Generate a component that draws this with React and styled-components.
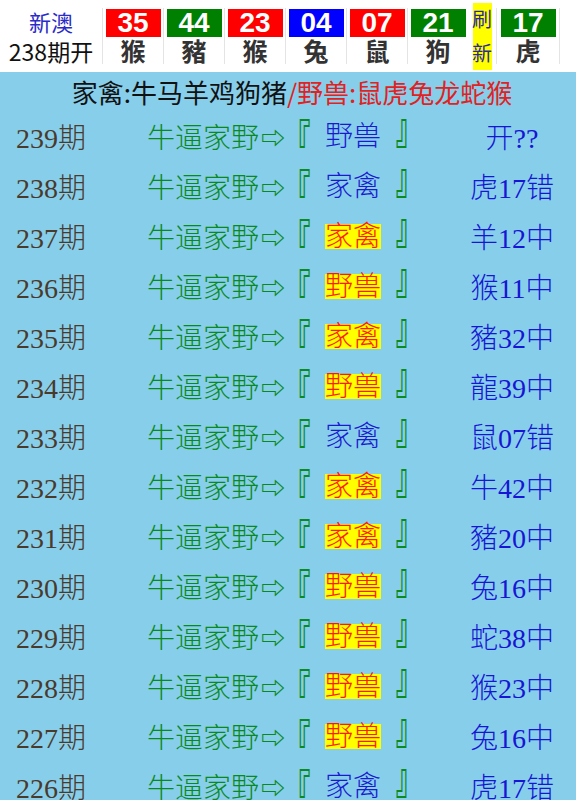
import React from "react";
import styled, { createGlobalStyle } from "styled-components";

const GlobalStyle = createGlobalStyle`
  body {
    margin: 0;
    background: #87ceeb;
    font-family: "Noto Sans CJK SC", "Noto Sans", sans-serif;
  }
`;

const balls = [
  { num: "35", animal: "猴", color: "#ff0000" },
  { num: "44", animal: "豬", color: "#008000" },
  { num: "23", animal: "猴", color: "#ff0000" },
  { num: "04", animal: "兔", color: "#0000ff" },
  { num: "07", animal: "鼠", color: "#ff0000" },
  { num: "21", animal: "狗", color: "#008000" },
];

const special = { num: "17", animal: "虎", color: "#008000" };

const rows = [
  { period: "239", word: "野兽", hit: false, result: "开??" },
  { period: "238", word: "家禽", hit: false, result: "虎17错" },
  { period: "237", word: "家禽", hit: true, result: "羊12中" },
  { period: "236", word: "野兽", hit: true, result: "猴11中" },
  { period: "235", word: "家禽", hit: true, result: "豬32中" },
  { period: "234", word: "野兽", hit: true, result: "龍39中" },
  { period: "233", word: "家禽", hit: false, result: "鼠07错" },
  { period: "232", word: "家禽", hit: true, result: "牛42中" },
  { period: "231", word: "家禽", hit: true, result: "豬20中" },
  { period: "230", word: "野兽", hit: true, result: "兔16中" },
  { period: "229", word: "野兽", hit: true, result: "蛇38中" },
  { period: "228", word: "野兽", hit: true, result: "猴23中" },
  { period: "227", word: "野兽", hit: true, result: "兔16中" },
  { period: "226", word: "家禽", hit: false, result: "虎17错" },
];

const Ball = ({ num, animal, color }) => (
  <BallCell>
    <NumBox $bg={color}>{num}</NumBox>
    <Animal>{animal}</Animal>
  </BallCell>
);

const App = () => (
  <>
    <GlobalStyle />
    <Header>
      <DrawInfo>
        <Region>新澳</Region>
        <Issue>238期开</Issue>
      </DrawInfo>
      {balls.map((b, i) => (
        <Ball key={i} {...b} />
      ))}
      <Refresh>
        <span>刷</span>
        <span>新</span>
      </Refresh>
      <Ball {...special} />
    </Header>
    <Board>
      <Title>
        家禽:牛马羊鸡狗猪<Wild>/野兽:鼠虎兔龙蛇猴</Wild>
      </Title>
      {rows.map((r) => (
        <Row key={r.period}>
          <Period>{r.period}期</Period>
          <Pick>
            牛逼家野<Arrow>⇨</Arrow>
            <Bracket $side="open">『</Bracket>
            <Word $hit={r.hit}>{r.word}</Word>
            <Bracket $side="close">』</Bracket>
          </Pick>
          <Result>{r.result}</Result>
        </Row>
      ))}
    </Board>
  </>
);

const Header = styled.div`
  display: grid;
  grid-template-columns: 102px repeat(6, 61px) 28px 64px;
  align-items: center;
  height: 72px;
  background: #fff;
`;

const DrawInfo = styled.div`
  display: flex;
  flex-direction: column;
  align-items: center;
  line-height: 30px;
  font-size: 22px;
`;

const Region = styled.div`
  color: #2b2bc8;
`;

const Issue = styled.div`
  color: #111;
  font-size: 23px;
`;

const BallCell = styled.div`
  display: flex;
  flex-direction: column;
  align-items: center;
  height: 56px;
  padding-top: 1px;
  box-sizing: border-box;
  border-left: 1px solid #e4e4e4;
  &:last-child {
    border-right: 1px solid #e4e4e4;
  }
`;

const NumBox = styled.div`
  width: 55px;
  height: 28px;
  background: ${(p) => p.$bg};
  color: #fff;
  font-family: "Liberation Sans", Arial, sans-serif;
  font-weight: bold;
  font-size: 28px;
  line-height: 28px;
  text-align: center;
`;

const Animal = styled.div`
  font-size: 25px;
  font-weight: bold;
  line-height: 27px;
  color: #333;
`;

const Refresh = styled.div`
  justify-self: center;
  display: flex;
  flex-direction: column;
  align-items: center;
  justify-content: space-around;
  width: 19px;
  height: 67px;
  background: #ffff00;
  color: #2a2aa0;
  font-size: 20px;
  line-height: 28px;
`;

const Board = styled.div`
  background: #87ceeb;
`;

const Title = styled.div`
  height: 39px;
  line-height: 39px;
  padding-left: 8px;
  text-align: center;
  font-size: 26px;
  color: #111;
`;

const Wild = styled.span`
  color: #e02222;
`;

const Row = styled.div`
  display: grid;
  grid-template-columns: 102px 366px 88px;
  align-items: center;
  height: 50px;
  font-size: 28px;
  font-weight: 300;
  font-family: "Liberation Serif", "Noto Sans CJK SC", serif;
  white-space: nowrap;
`;

const Period = styled.div`
  text-align: center;
  color: #4a3a2c;
`;

const Pick = styled.div`
  display: flex;
  align-items: center;
  justify-content: center;
  color: #0a8a1e;
`;

const Arrow = styled.span`
  display: inline-block;
  width: 22px;
  margin-left: 2px;
  font-size: 24px;
  font-weight: bold;
`;

const Bracket = styled.span`
  display: inline-block;
  width: 28px;
  height: 28px;
  line-height: 28px;
  font-weight: bold;
  color: #0b8a22;
  transform: scale(0.95, 1.55);
  transform-origin: ${(p) => (p.$side === "open" ? "50% 10%" : "50% 90%")};
`;

const Word = styled.span`
  display: inline-block;
  width: 56px;
  height: 25px;
  line-height: 25px;
  margin: 0 14px;
  background: ${(p) => (p.$hit ? "#ffff00" : "transparent")};
  color: ${(p) => (p.$hit ? "#ff1a00" : "#1a1ad0")};
`;

const Result = styled.div`
  text-align: center;
  color: #1616d4;
`;

export default App;
